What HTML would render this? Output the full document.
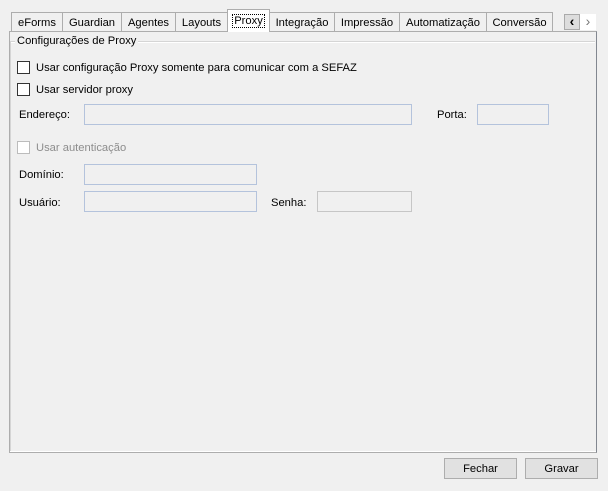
<!DOCTYPE html><html><head><style>
body{margin:0;width:608px;height:491px;background:#f0f0f0;font-family:"Liberation Sans",sans-serif;font-size:11.2px;color:#000;position:relative;overflow:hidden}
.a{position:absolute}
.tab{position:absolute;top:12px;height:19px;border:1px solid #adadad;border-bottom:none;background:#f0f0f0;line-height:20px;text-align:center;box-sizing:border-box}
.cb{position:absolute;width:13px;height:13px;border:1px solid #333;background:#fff;box-sizing:border-box}
.box{position:absolute;height:21px;border:1px solid #b4c3dc;box-sizing:border-box;background:#f0f0f0}
.btn{position:absolute;top:458px;width:73px;height:21px;border:1px solid #adadad;background:#e1e1e1;box-sizing:border-box;text-align:center;line-height:20px}
</style></head><body>
<div class="a" style="left:9px;top:31px;width:588px;height:422px;border:1px solid #adadad;border-right-color:#828790;box-sizing:border-box;background:#f0f0f0;box-shadow:inset 0 -1px 0 #fff"></div>
<div class="tab" style="left:11px;width:52px">eForms</div>
<div class="tab" style="left:62px;width:60px">Guardian</div>
<div class="tab" style="left:121px;width:55px">Agentes</div>
<div class="tab" style="left:175px;width:53px">Layouts</div>
<div class="tab" style="left:227px;top:9px;height:23px;width:43px;background:#fff;line-height:22px"><span style="outline:1px dotted #000;padding:0 1px">Proxy</span></div>
<div class="tab" style="left:269px;width:66px">Integração</div>
<div class="tab" style="left:334px;width:66px">Impressão</div>
<div class="tab" style="left:399px;width:88px">Automatização</div>
<div class="tab" style="left:486px;width:67px">Conversão</div>
<div class="a" style="left:564px;top:14px;width:16px;height:16px;background:#ddd;border:1px solid #aaa;box-sizing:border-box;text-align:center;line-height:13px;font-weight:bold;font-size:14px">‹</div>
<div class="a" style="left:580px;top:14px;width:16px;height:16px;background:#fff;box-sizing:border-box;text-align:center;line-height:14px;color:#777;font-size:14px">›</div>
<div class="a" style="left:10px;top:41px;width:585px;border-top:1px solid #d5d5d5;border-bottom:1px solid #fff"></div>
<div class="a" style="left:10px;top:41px;height:410px;border-left:1px solid #d5d5d5"></div>
<div class="a" style="left:15px;top:35px;background:#f0f0f0;padding:0 2px">Configurações de Proxy</div>
<div class="cb" style="left:17px;top:61px"></div><div class="a" style="left:36px;top:62px">Usar configuração Proxy somente para comunicar com a SEFAZ</div>
<div class="cb" style="left:17px;top:83px"></div><div class="a" style="left:36px;top:84px">Usar servidor proxy</div>
<div class="a" style="left:19px;top:109px">Endereço:</div><div class="box" style="left:84px;top:104px;width:328px"></div>
<div class="a" style="left:437px;top:109px">Porta:</div><div class="box" style="left:477px;top:104px;width:72px"></div>
<div class="cb" style="left:17px;top:141px;border-color:#bcbcbc"></div><div class="a" style="left:36px;top:142px;color:#8d8d8d">Usar autenticação</div>
<div class="a" style="left:19px;top:169px">Domínio:</div><div class="box" style="left:84px;top:164px;width:173px"></div>
<div class="a" style="left:19px;top:197px">Usuário:</div><div class="box" style="left:84px;top:191px;width:173px"></div>
<div class="a" style="left:271px;top:197px">Senha:</div><div class="box" style="left:317px;top:191px;width:95px;border-color:#c6c6c6"></div>
<div class="btn" style="left:444px">Fechar</div>
<div class="btn" style="left:525px">Gravar</div>
</body></html>
